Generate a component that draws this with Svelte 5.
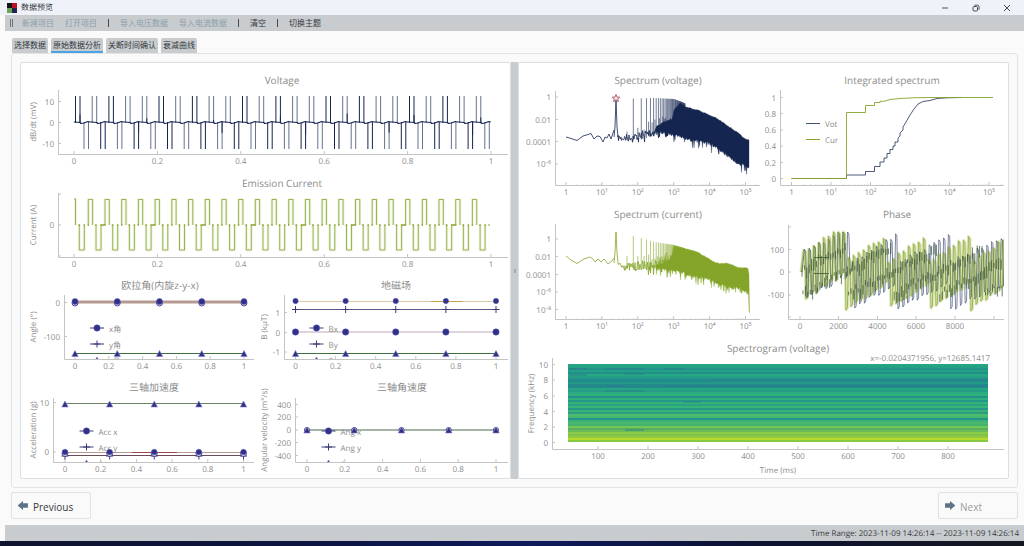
<script lang="ts">
	type Tick = [number, string];
	type Line = { d: string; color: string; width?: number; fill?: string; opacity?: number };
	type Marks = { shape: string; y: number; xs: number[]; r?: number };
	type Chart = {
		id: string;
		view: number[];
		title: string;
		titleAt: number[];
		// left, top, right, bottom
		axes: number[];
		xTicks: Tick[];
		yTicks: Tick[];
		xLabel?: string;
		yLabel?: string;
		yLabelX?: number;
		lines?: Line[];
		marks?: Marks[];
		legend?: { x: number; names: string[] };
		logX?: number;
		wide?: boolean;
	};

	const NAVY = '#14254f';
	const GREEN = '#85a52a';

	let seed = 7;
	function rand() {
		seed = (seed * 16807) % 2147483647;
		return seed / 2147483647;
	}

	function interpolate(points: number[][], x: number) {
		for (let i = 1; i < points.length; i++) {
			const [x0, y0] = points[i - 1];
			const [x1, y1] = points[i];
			if (x <= x1) return y0 + ((y1 - y0) * (x - x0)) / (x1 - x0);
		}
		return points[points.length - 1][1];
	}

	function linearTicks(from: number, to: number): Tick[] {
		return ['0', '0.2', '0.4', '0.6', '0.8', '1'].map((t) => [from + (to - from) * Number(t), t]);
	}

	function decades(from: number, step: number): Tick[] {
		return ['1', '10¹', '10²', '10³', '10⁴', '10⁵'].map((t, i) => [from + step * i, t]);
	}

	function quarters(from: number, to: number) {
		return [0, 0.25, 0.5, 0.75, 1].map((t) => from + (to - from) * t);
	}

	const PERIOD = 16.7;

	function voltageLines(): Line[] {
		let base = 'M74 122';
		let thin = '';
		let thick = '';
		for (let i = 0; i < 25; i++) {
			const x = 74 + i * PERIOD;
			const up = `M${x + 1.5} 123V96M${x + 6} 123V96`;
			const down = `M${x + 10} 122V149M${x + 14.5} 122V149`;
			if (i % 5 === 0 || i % 5 === 2) thick += up;
			else thin += up;
			if (i % 4 === 1 || i % 4 === 3) thick += down;
			else thin += down;
			if (i % 4 === 0) thick += `M${x + 6} 123V${112 + rand() * 8}`;
			if (i % 5 === 3) thick += `M${x + 14.5} 122V${128 + rand() * 8}`;
			base += `L${x + 1} 122L${x + 6} 122.5L${x + 7} 123.5L${x + 10} 123L${x + 14} 121.5L${x + 16} 122`;
		}
		return [
			{ d: thin, color: NAVY, width: 1, opacity: 0.65 },
			{ d: thick, color: NAVY, width: 1 },
			{ d: base, color: NAVY, width: 1.2 }
		];
	}

	function currentLines(): Line[] {
		let pulses = 'M74 199H75.5V225';
		let zero = '';
		for (let i = 0; i < 25; i++) {
			const x = 74 + i * PERIOD;
			pulses += `M${x + 5.3} 225V250H${x + 10.3}V225`;
			if (i < 24) pulses += `M${x + 14.3} 225V199.5H${x + 18.6}V225`;
			zero += `M${x + 4.4} 225H${x + 6}M${x + 9.6} 225H${x + (i % 3 === 1 ? 14.3 : 11)}`;
			zero += `M${x + 13.6} 225H${x + 15}`;
		}
		return [
			{ d: pulses, color: GREEN, width: 3, opacity: 0.12 },
			{ d: pulses, color: GREEN, width: 1, opacity: 0.8 },
			{ d: zero, color: GREEN, width: 1.5 }
		];
	}

	function spectrumLines(
		color: string,
		head: string,
		upper: number[][],
		lower: number[][],
		floor: number[][],
		peaks: number[][]
	): Line[] {
		let noise = 'M618 ' + floor[0][1];
		for (let x = 618; x < 676; x += 1) {
			const depth = interpolate([[618, 4], [645, 9], [676, 12]], x);
			noise += `L${x} ${interpolate(floor, x) + (rand() - 0.5) * depth}`;
			noise += `L${x + 0.5} ${interpolate(floor, x) + (rand() - 0.4) * depth * 1.6}`;
		}
		let spikes = '';
		for (let n = 3; n < 84; n += 2) {
			const x = 566 + 35.9 * Math.log10(25 * n);
			spikes += `M${x} ${interpolate(floor, x) + 4}V${interpolate(peaks, x)}`;
		}
		// even harmonics stay well below the odd ones
		for (let n = 2; n < 30; n += 2) {
			const x = 566 + 35.9 * Math.log10(25 * n);
			spikes += `M${x} ${interpolate(floor, x) + 3}v${-8 - rand() * 7}`;
		}
		let body = '';
		const end = upper[upper.length - 1][0];
		for (let x = upper[0][0]; x <= end; x += 1) {
			body += `${body ? 'L' : 'M'}${x} ${interpolate(upper, x) + (rand() - 0.5)}`;
		}
		for (let x = end; x >= lower[0][0]; x -= 0.5) {
			const hang = rand() < 0.3 ? rand() * 10 : rand() * 3;
			body += `L${x} ${interpolate(lower, x) + hang}`;
		}
		const startY = interpolate(peaks, 616);
		const baseY = interpolate(floor, 616);
		return [
			{ d: head, color, width: 0.8 },
			{ d: `M614 ${baseY}L615 ${baseY - 10}L616 ${startY}L617 ${baseY - 10}L618 ${baseY}`, color, width: 0.8 },
			{ d: noise, color, width: 0.8 },
			{ d: spikes, color, width: 0.7, opacity: 0.85 },
			{ d: body + 'Z', color, width: 0.3, fill: color }
		];
	}

	const voltageSpectrum = spectrumLines(
		NAVY,
		'M566 137L571 138.5L577 140.5L583 136L588 134.5L591 133.5L594 139L597 136L600 136.5L603 142L605 137L607 138L609 134L611 139L614 130',
		[[656, 127], [664, 122], [672, 119], [674, 110], [680, 103], [686, 107], [698, 110], [707, 114], [716, 118], [727, 125], [738, 133], [745, 139], [749, 140]],
		[[656, 129], [666, 132], [680, 135], [692, 139], [707, 141], [716, 146], [727, 154], [738, 162], [749, 166]],
		[[616, 137], [622, 138], [640, 136], [655, 131], [664, 128], [676, 124]],
		[[616, 98], [633, 98.5], [655, 98], [674, 99], [682, 102], [690, 106]]
	);

	const currentSpectrum = spectrumLines(
		GREEN,
		'M566 256L571 260L577 263.5L584 259L590 257L593 259L595 262L598 259L601 262L604 259L608 264L612 261L614 258',
		[[656, 265], [664, 263], [671, 258], [674, 246], [684, 248], [697, 252], [706, 257], [712, 261], [719, 263.5], [728, 263.5], [735, 266], [740, 268], [748, 268], [749.5, 278]],
		[[656, 266], [664, 268], [678, 270], [693, 275], [708, 277], [718, 283], [728, 286], [740, 287], [747, 290], [748.5, 292], [749.5, 311]],
		[[616, 263], [622, 266], [640, 266], [662, 265], [676, 261]],
		[[616, 232], [633, 236], [641, 238], [655, 242], [674, 245], [690, 250]]
	);

	function phaseLine(stops: number[], offset: number, step: number) {
		let d = '';
		let high = false;
		for (let x = 801 + offset; x < 1004; x += step) {
			const k = stops.findIndex((s) => x < s);
			const from = k === 0 ? 801 : stops[k - 1];
			const t = (x - from) / (stops[k] - from);
			const centre = (k === 0 ? 277 : 286) - t * 27;
			const y = Math.max(232, Math.min(312, centre + (high ? -24 : 24) + (rand() - 0.5) * 4));
			d += d ? `L${x} ${y}L${x + step * 0.55} ${y + (high ? 2 : -2)}` : `M${x} 272`;
			high = !high;
		}
		return d;
	}

	function phaseLines(): Line[] {
		const green = phaseLine([845, 887, 928, 969, 1012], 0, 2.5);
		const blue = phaseLine([851, 897, 950, 1006], 1, 2.4);
		let dashes = '';
		for (let x = 802; x < 1003; x += 2.4) {
			const lift = ((x - 800) % 46) / 2;
			dashes += `M${x} ${264 - lift + rand() * 8}v${4 + rand() * 8}M${x + 1} ${288 - lift + rand() * 8}v${3 + rand() * 8}`;
		}
		return [
			{ d: green, color: '#c5d48f', width: 3, opacity: 0.6 },
			{ d: blue, color: NAVY, width: 0.7, opacity: 0.8 },
			{ d: green, color: GREEN, width: 0.7 },
			{ d: dashes, color: '#2f4a2c', width: 1, opacity: 0.7 },
			{ d: 'M814 257.5H829M814 273.5H829', color: '#3c5a2c', width: 0.8 }
		];
	}

	const eulerXs = quarters(75, 244);
	const fieldXs = quarters(295.5, 496);
	const accXs = quarters(65, 243.5);
	const angXs = quarters(307, 496);

	const fieldCharts: Chart[] = [
		{
			id: 'voltage',
			view: [21, 63, 489, 108],
			title: 'Voltage',
			titleAt: [282, 80],
			axes: [58, 90, 508, 154],
			xTicks: linearTicks(74, 491),
			yTicks: [[101.5, '10'], [122.5, '0'], [143.5, '-10']],
			yLabel: 'dB/dt (mV)',
			yLabelX: 33,
			lines: voltageLines(),
			wide: true
		},
		{
			id: 'current',
			view: [21, 171, 489, 103],
			title: 'Emission Current',
			titleAt: [282, 183],
			axes: [58, 193, 508, 257],
			xTicks: linearTicks(74, 491),
			yTicks: [[194, ''], [225, '0'], [256, '']],
			yLabel: 'Current (A)',
			yLabelX: 33,
			lines: currentLines(),
			wide: true
		},
		{
			id: 'euler',
			view: [21, 274, 237, 102],
			title: '欧拉角(内旋z-y-x)',
			titleAt: [160, 285],
			axes: [64, 295, 254, 359],
			xTicks: linearTicks(75, 244),
			yTicks: [[302.5, '0'], [336.5, '-100']],
			yLabel: 'Angle (°)',
			yLabelX: 33,
			lines: [
				{ d: 'M75 302H244', color: '#b59a92', width: 3 },
				{ d: 'M75 353.5H244', color: '#3c7040', width: 1 }
			],
			marks: [
				{ shape: 'ring', y: 303, xs: eulerXs, r: 3 },
				{ shape: 'circle', y: 301.5, xs: eulerXs, r: 3 },
				{ shape: 'triangle', y: 353.5, xs: eulerXs }
			],
			legend: { x: 97, names: ['x角', 'y角', 'z角'] }
		},
		{
			id: 'field',
			view: [258, 274, 252, 102],
			title: '地磁场',
			titleAt: [396, 285],
			axes: [284, 295, 508, 359],
			xTicks: linearTicks(295.5, 496),
			yTicks: [[312.5, '1'], [332.5, '0'], [352, '-1']],
			yLabel: 'B (kμT)',
			yLabelX: 264,
			lines: [
				{ d: 'M295 301.5H496', color: '#dcc9a6', width: 1 },
				{ d: 'M431 301.5H463', color: '#c9a14a', width: 1 },
				{ d: 'M295 309.5H496', color: '#5a5590', width: 1 },
				{ d: 'M295 332H496', color: '#bba9ba', width: 1 },
				{ d: 'M295 353.5H496', color: '#3c7040', width: 1 }
			],
			marks: [
				{ shape: 'circle', y: 301, xs: fieldXs, r: 2.7 },
				{ shape: 'plus', y: 309.5, xs: fieldXs },
				{ shape: 'circle', y: 332, xs: fieldXs, r: 3.2 },
				{ shape: 'triangle', y: 353.5, xs: fieldXs }
			],
			legend: { x: 316.5, names: ['Bx', 'By', 'Bz'] }
		},
		{
			id: 'acceleration',
			view: [21, 376, 237, 102],
			title: '三轴加速度',
			titleAt: [154, 387],
			axes: [53, 398, 254, 462],
			xTicks: linearTicks(65, 243.5),
			yTicks: [[402.5, '10'], [452, '0']],
			yLabel: 'Acceleration (g)',
			yLabelX: 33,
			lines: [
				{ d: 'M65 403.5H243', color: '#6f7f65', width: 1 },
				{ d: 'M65 452.5H243', color: '#b59a92', width: 1 },
				{ d: 'M132 452.5H177', color: '#9a4a4a', width: 1 },
				{ d: 'M65 455.5H243', color: '#6b4a5a', width: 1 }
			],
			marks: [
				{ shape: 'triangle', y: 404, xs: accXs },
				{ shape: 'plus', y: 456, xs: accXs },
				{ shape: 'ring', y: 453.5, xs: accXs, r: 3 },
				{ shape: 'circle', y: 452, xs: accXs, r: 2.8 }
			],
			legend: { x: 86.5, names: ['Acc x', 'Acc y', 'Acc z'] }
		},
		{
			id: 'angular',
			view: [258, 376, 252, 102],
			title: '三轴角速度',
			titleAt: [402, 387],
			axes: [295, 398, 508, 462],
			xTicks: linearTicks(307, 496),
			yTicks: [[404.5, '400'], [417, '200'], [430, '0'], [442.5, '-200'], [455.5, '-400']],
			yLabel: 'Angular velocity (m°/s)',
			yLabelX: 264,
			lines: [{ d: 'M307 430H496', color: '#4a6a50', width: 1.2 }],
			marks: [
				{ shape: 'ring', y: 430, xs: angXs, r: 2.6 },
				{ shape: 'triangle', y: 430, xs: angXs }
			],
			legend: { x: 328.5, names: ['Ang x', 'Ang y', 'Ang z'] }
		}
	];

	const spectrumCharts: Chart[] = [
		{
			id: 'spectrum-voltage',
			view: [519, 63, 245, 141],
			title: 'Spectrum (voltage)',
			titleAt: [658, 80],
			axes: [555, 91, 760, 185],
			xTicks: decades(566, 35.9),
			yTicks: [[97, '1'], [119.5, '0.01'], [141.5, '0.0001'], [164, '10⁻⁶']],
			lines: voltageSpectrum,
			logX: 35.9
		},
		{
			id: 'integrated',
			view: [764, 63, 244, 141],
			title: 'Integrated spectrum',
			titleAt: [892, 80],
			axes: [780, 90, 1004, 185],
			xTicks: decades(791.5, 39.5),
			yTicks: [[97.5, '1'], [113.5, '0.8'], [130, '0.6'], [146, '0.4'], [162.5, '0.2'], [178.5, '0']],
			lines: [
				{
					d: 'M791.5 178.5H846.5V175H865.5V171.5H874.5V166.5H880V162H884V158H887V153.5H890V149.5H893V146H895V142H898V138L900 136V133L903 130V127L906 122L910 115L914 109L918 104L923 101.5L930 100.5L937 98.5L947 97.8L962 97.5',
					color: NAVY,
					width: 1,
					opacity: 0.75
				},
				{
					d: 'M791.5 178.5H846.5V112.5H865.5V105.5H874.5V102.5H880V101.3H884L890 99.5L900 98.5L915 97.7L930 97.5H993',
					color: GREEN,
					width: 1,
					opacity: 0.9
				},
				{ d: 'M806 123.5H820', color: NAVY, width: 1, opacity: 0.8 },
				{ d: 'M806 139.5H820', color: GREEN, width: 1 }
			],
			logX: 39.5
		},
		{
			id: 'spectrum-current',
			view: [519, 204, 245, 133],
			title: 'Spectrum (current)',
			titleAt: [658, 214],
			axes: [555, 224, 760, 319],
			xTicks: decades(566, 35.9),
			yTicks: [[239, '1'], [256.5, '0.01'], [274.5, '0.0001'], [292, '10⁻⁶'], [309.5, '10⁻⁸']],
			lines: currentSpectrum,
			logX: 35.9
		},
		{
			id: 'phase',
			view: [764, 204, 244, 133],
			title: 'Phase',
			titleAt: [897, 214],
			axes: [788, 225, 1004, 319],
			xTicks: [[800, '0'], [838.5, '2000'], [877.5, '4000'], [916, '6000'], [955, '8000'], [994, '']],
			yTicks: [[227, ''], [249.5, '100'], [272, '0'], [295, '-100'], [317, '']],
			lines: phaseLines()
		},
		{
			id: 'spectrogram',
			view: [519, 337, 489, 141],
			title: 'Spectrogram (voltage)',
			titleAt: [778, 348],
			axes: [552, 358, 1004, 449],
			xTicks: [1, 2, 3, 4, 5, 6, 7, 8].map((n) => [548 + n * 50, `${n}00`]),
			yTicks: [[364.5, '10'], [380, '8'], [396, '6'], [411.5, '4'], [427, '2'], [442.5, '0']],
			xLabel: 'Time (ms)',
			yLabel: 'Frequency (kHz)',
			yLabelX: 531,
			wide: true
		}
	];

	// one band per 2px, high frequencies first
	const bands = [
		'#27a583', '#23a184', '#239289', '#23a085', '#219088', '#27a784', '#259f86', '#22918a', '#218a8b', '#24998a',
		'#24898b', '#228a8b', '#27a683', '#259c86', '#2bab80', '#2fb07c', '#249089', '#30b07c', '#259989', '#34b379',
		'#2aa283', '#36b579', '#27978a', '#3ab277', '#2d9f80', '#4cbc6c', '#45b870', '#26928a', '#3bb276', '#4ab76c',
		'#45b270', '#72c855', '#5dae5e', '#68bb57', '#8acb48', '#7fc24c', '#93c83f', '#b5dc2c', '#86c945'
	];

	const patches = [
		[569, 368, 18], [569, 374, 18], [606, 368, 38], [625, 373, 19], [664, 368, 20], [606, 385, 20],
		[606, 390, 38], [664, 385, 40], [702, 385, 286], [683, 401, 18], [625, 429, 19], [710, 379, 278]
	];

	const menu = [
		{ label: '新建项目', disabled: true },
		{ label: '打开项目', disabled: true },
		{ label: '', disabled: false },
		{ label: '导入电压数据', disabled: true },
		{ label: '导入电流数据', disabled: true },
		{ label: '', disabled: false },
		{ label: '清空', disabled: false },
		{ label: '', disabled: false },
		{ label: '切换主题', disabled: false }
	];

	const tabs = ['选择数据', '原始数据分析', '关断时间确认', '衰减曲线'];
	let activeTab = $state(1);

	function minorTicks(chart: Chart) {
		const step = chart.logX ?? 0;
		const out: number[] = [];
		for (let d = 0; d < 6 && step; d++) {
			for (let n = 2; n < 10; n++) {
				const x = chart.xTicks[0][0] + step * (d + Math.log10(n));
				if (x < chart.axes[2]) out.push(x);
			}
		}
		return out;
	}
</script>

{#snippet mark(shape: string, x: number, y: number, r: number)}
	{#if shape === 'circle'}
		<circle class="mark" cx={x} cy={y} {r} />
	{:else if shape === 'ring'}
		<circle class="ring" cx={x} cy={y} {r} />
	{:else if shape === 'plus'}
		<path class="plus" d="M{x - 3.5} {y}h7M{x} {y - 3.5}v7" />
	{:else}
		<path class="triangle" d="M{x} {y - 3}l3.2 6h-6.4z" />
	{/if}
{/snippet}

{#snippet plot(chart: Chart)}
	{@const [left, top, right, bottom] = chart.axes}
	<svg class="chart" class:wide={chart.wide} viewBox={chart.view.join(' ')} role="img" aria-label={chart.title}>
		<clipPath id="clip-{chart.id}">
			<rect x={left} y={top - 2} width={right - left} height={bottom - top + 2} />
		</clipPath>

		<text class="heading" x={chart.titleAt[0]} y={chart.titleAt[1] + 4}>{chart.title}</text>
		<path class="axis" d="M{left}.5 {top}V{bottom}.5H{right}" />

		{#each chart.xTicks as [x, label]}
			<path class="axis" d="M{x} {bottom}v-3" />
			<text class="tick" {x} y={bottom + 10}>{label}</text>
		{/each}
		{#each minorTicks(chart) as x}
			<path class="axis faint" d="M{x} {bottom}v-1" />
		{/each}
		{#each chart.yTicks as [y, label]}
			<path class="axis" d="M{left} {y}h3" />
			<text class="tick end" x={left - 4} y={y + 3}>{label}</text>
		{/each}
		{#if chart.yLabel}
			<text class="tick" transform="translate({(chart.yLabelX ?? 0) + 3} {(top + bottom) / 2}) rotate(-90)">{chart.yLabel}</text>
		{/if}
		{#if chart.xLabel}
			<text class="tick" x={(left + right) / 2} y={bottom + 24}>{chart.xLabel}</text>
		{/if}

		<g clip-path="url(#clip-{chart.id})">
			{#each chart.lines ?? [] as line}
				<path
					d={line.d}
					fill={line.fill ?? 'none'}
					stroke={line.color}
					stroke-width={line.width ?? 1}
					stroke-linejoin="round"
					opacity={line.opacity ?? 1}
				/>
			{/each}
			{#if chart.legend}
				{#each chart.legend.names as name, i}
					{@const y = bottom - 31 + i * 16}
					<path class="plus" d="M{chart.legend.x - 7} {y}h14" />
					{@render mark(['circle', 'plus', 'triangle'][i], chart.legend.x, y, 3.2)}
					<text class="tick start" x={chart.legend.x + 12} y={y + 4}>{name}</text>
				{/each}
			{/if}
			{#each chart.marks ?? [] as series}
				{#each series.xs as x}
					{@render mark(series.shape, x, series.y, series.r ?? 3)}
				{/each}
			{/each}
		</g>

		{#if chart.id === 'spectrum-voltage'}
			<path
				class="star"
				d="M616 94.5l1.1 2.5 2.7.2-2.1 1.8.7 2.7-2.4-1.5-2.4 1.5.7-2.7-2.1-1.8 2.7-.2z"
			/>
		{:else if chart.id === 'integrated'}
			<text class="tick start" x="825" y="127">Vot</text>
			<text class="tick start" x="825" y="143">Cur</text>
		{:else if chart.id === 'spectrogram'}
			<g shape-rendering="crispEdges">
				{#each bands as color, i}
					<rect x="568" y={364 + i * 2} width="420" height="2" fill={color} />
				{/each}
				{#each patches as [x, y, width]}
					<rect {x} {y} {width} height="2" fill="#2a788e" opacity="0.4" />
				{/each}
			</g>
			<text class="tick end" x="990" y="361">x=-0.0204371956, y=12685.1417</text>
		{/if}
	</svg>
{/snippet}

<div class="window">
	<header class="titlebar">
		<svg class="logo" viewBox="0 0 10 10" aria-hidden="true">
			<rect width="5" height="5" fill="#18121c" />
			<rect x="5" width="5" height="5" fill="#bf1226" />
			<rect y="5" width="5" height="5" fill="#6ea355" />
			<rect x="5" y="5" width="5" height="5" fill="#1f2450" />
		</svg>
		<span class="caption">数据预览</span>
		<button type="button" class="control" aria-label="Minimize">
			<svg viewBox="0 0 8 8"><path d="M1 4h6" /></svg>
		</button>
		<button type="button" class="control" aria-label="Restore">
			<svg viewBox="0 0 8 8">
				<rect x="1" y="2.5" width="4.5" height="4.5" rx="1" />
				<path d="M2.5 1.2h3a1.5 1.5 0 0 1 1.5 1.5v3" />
			</svg>
		</button>
		<button type="button" class="control" aria-label="Close">
			<svg viewBox="0 0 8 8"><path d="M1 1l6 6M7 1l-6 6" /></svg>
		</button>
	</header>

	<nav class="toolbar" aria-label="工具栏">
		<span class="handle"></span>
		{#each menu as item}
			{#if item.label}
				<button type="button" disabled={item.disabled}>{item.label}</button>
			{:else}
				<span class="separator"></span>
			{/if}
		{/each}
	</nav>

	<main>
		<div class="tabs" role="tablist">
			{#each tabs as tab, i}
				<button
					type="button"
					role="tab"
					aria-selected={activeTab === i}
					class:active={activeTab === i}
					onclick={() => (activeTab = i)}>{tab}</button
				>
			{/each}
		</div>

		<div class="frame">
			<section class="panel fields">
				{#each fieldCharts as chart (chart.id)}
					{@render plot(chart)}
				{/each}
			</section>
			<div class="splitter"><span></span></div>
			<section class="panel spectra">
				{#each spectrumCharts as chart (chart.id)}
					{@render plot(chart)}
				{/each}
			</section>
		</div>

		<div class="pager">
			<button type="button">
				<svg viewBox="0 0 12 10" aria-hidden="true"><path d="M0 5L6 0v2.500h5.500v5H6V10z" /></svg>
				Previous
			</button>
			<button type="button" disabled>
				<svg viewBox="0 0 12 10" aria-hidden="true"><path d="M12 5L6 0v2.500H.5v5H6V10z" /></svg>
				Next
			</button>
		</div>
	</main>

	<footer class="status">Time Range: 2023-11-09 14:26:14 -- 2023-11-09 14:26:14</footer>
	<div class="taskbar"></div>
</div>

<style>
	:global(body) {
		margin: 0;
		background: #fafafa;
	}

	.window {
		display: flex;
		flex-direction: column;
		min-height: 100vh;
		font-family: 'Open Sans', 'Noto Sans', 'Noto Sans CJK SC', sans-serif;
		font-size: 8px;
		line-height: 12px;
		color: #33383c;
		background: #fafafa;
		text-rendering: geometricPrecision;
	}

	button {
		margin: 0;
		padding: 0;
		border: none;
		background: none;
		font: inherit;
		color: inherit;
	}

	.titlebar {
		display: flex;
		align-items: center;
		height: 15px;
		padding: 0 5px 0 7px;
		background: #eff2f9;
	}

	.logo {
		width: 10px;
		height: 10px;
		margin-right: 4px;
	}

	.caption {
		flex: 1;
	}

	.control {
		display: flex;
		justify-content: center;
		width: 24px;
		margin-left: 7px;
	}

	.control svg {
		width: 8px;
		height: 8px;
		fill: none;
		stroke: #4a4d52;
		stroke-width: 1;
	}

	.toolbar {
		display: flex;
		align-items: center;
		gap: 11px;
		height: 16px;
		margin-left: 5px;
		padding-left: 5px;
		background: #c8cccf;
	}

	.toolbar button:disabled {
		color: #8ba0ac;
	}

	.handle {
		width: 1px;
		height: 8px;
		margin-right: -2px;
		border: solid #6f7478;
		border-width: 0 1px;
	}

	.separator {
		width: 1px;
		height: 8px;
		background: #45494c;
	}

	main {
		flex: 1;
		padding: 7px 6px 6px 11px;
	}

	.tabs {
		display: flex;
		gap: 3px;
		padding-left: 1px;
	}

	.tabs button {
		height: 15px;
		padding: 0 2px;
		border-radius: 2px 2px 0 0;
		border-bottom: 2px solid #c8cccf;
		background: #c8cccf;
	}

	.tabs button.active {
		border-bottom-color: #4ba3e3;
	}

	.frame {
		display: flex;
		padding: 8px;
		border: 1px solid #e2e4e5;
		border-radius: 3px;
	}

	.panel {
		flex: 1;
		display: grid;
		align-content: start;
		border: 1px solid #dcdfe1;
		border-radius: 2px;
		background: #fff;
	}

	.fields {
		grid-template-columns: 237fr 252fr;
	}

	.spectra {
		grid-template-columns: 245fr 244fr;
	}

	.splitter {
		display: flex;
		align-items: center;
		justify-content: center;
		width: 7px;
		background: #c8cccf;
	}

	.splitter span {
		width: 2px;
		height: 4px;
		background: #a3a8ac;
	}

	.chart {
		display: block;
		width: 100%;
	}

	.wide {
		grid-column: 1 / -1;
	}

	.heading {
		font-size: 10px;
		fill: #8c8c8c;
		text-anchor: middle;
	}

	.tick {
		font-size: 8px;
		fill: #8c8c8c;
		text-anchor: middle;
	}

	.end {
		text-anchor: end;
	}

	.start {
		text-anchor: start;
	}

	.axis {
		fill: none;
		stroke: #c4c4c4;
		stroke-width: 1;
	}

	.faint {
		stroke-width: 0.5;
	}

	.mark {
		fill: #322f86;
		stroke: #5b5fc0;
		stroke-width: 0.5;
	}

	.ring {
		fill: #d5d5ea;
		stroke: #322f86;
		stroke-width: 0.8;
	}

	.plus {
		fill: none;
		stroke: #3a3878;
		stroke-width: 1;
	}

	.triangle {
		fill: #322f7c;
		stroke: #7d80d8;
		stroke-width: 0.6;
	}

	.star {
		fill: #f3d9dd;
		stroke: #a04858;
		stroke-width: 0.8;
	}

	.pager {
		display: flex;
		justify-content: space-between;
		margin-top: 4px;
	}

	.pager button {
		display: flex;
		align-items: center;
		gap: 4px;
		width: 80px;
		height: 27px;
		padding: 2px 5px 0;
		border: 1px solid #dfe1e3;
		border-radius: 2px;
		font-size: 10px;
	}

	.pager button:disabled {
		color: #9a9ea1;
	}

	.pager svg {
		width: 12px;
		height: 9px;
		margin-bottom: 2px;
		fill: #5d7488;
	}

	.status {
		height: 16px;
		margin-left: 5px;
		padding-right: 5px;
		line-height: 17px;
		text-align: right;
		background: #c8cccf;
	}

	.taskbar {
		height: 5px;
		background: linear-gradient(90deg, #10142e, #0c1440 30%, #0e1a5c 52%, #0c1233 72%, #14171f);
	}
</style>
